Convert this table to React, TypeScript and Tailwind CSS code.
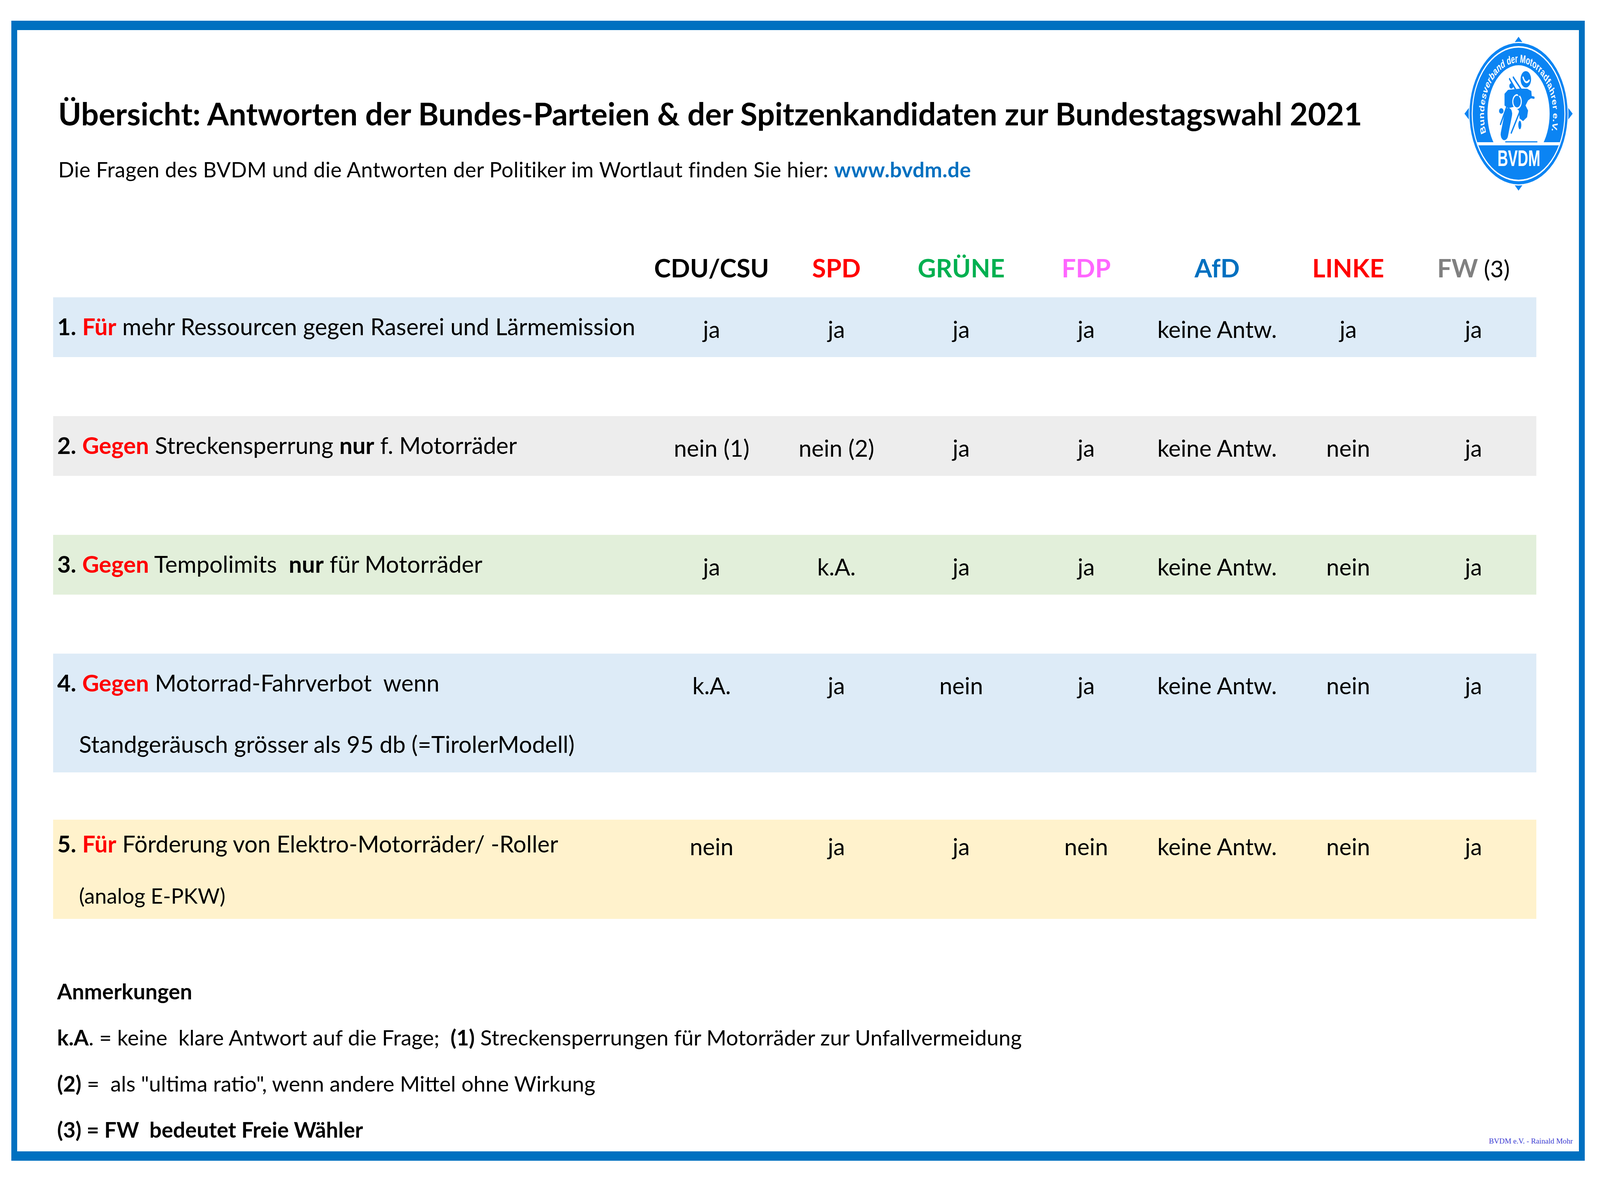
import React from "react";

// The frame is 4096 CSS px wide and 3028 tall: horizontal sizes follow the
// reference at 0.6416, vertical sizes follow it 1:1.
const GRID = "grid w-[3796.3px] grid-cols-[1525.7px_319.5px_319.5px_319.5px_320.2px_350.3px_320.8px_320.8px]";
const BLUE = "#0b84f3";

function Red({ children }: { children: React.ReactNode }) {
  return <span className="font-bold text-[#ff0000]">{children}</span>;
}

function B({ children }: { children: React.ReactNode }) {
  return <span className="font-bold">{children}</span>;
}

function Logo() {
  return (
    <svg viewBox="0 0 432 394" preserveAspectRatio="none" className="w-[277px] h-[394px]">
      <defs>
        <clipPath id="badgeInner">
          <ellipse cx="216" cy="197" rx="183" ry="169" />
        </clipPath>
        <path id="badgeArc" d="M 86.3 245.8 A 138 134 0 1 1 345.7 245.8" />
      </defs>
      {/* compass points */}
      <polygon points="216,0 154,56 278,56" fill={BLUE} />
      <polygon points="216,394 154,338 278,338" fill={BLUE} />
      <polygon points="0,197 56,150 56,244" fill={BLUE} />
      <polygon points="432,197 376,150 376,244" fill={BLUE} />
      <ellipse cx="216" cy="197" rx="199" ry="184" fill="white" />
      <ellipse cx="216" cy="197" rx="196" ry="181" fill={BLUE} />
      <circle cx="216" cy="197" r="124" fill="white" />
      <g clipPath="url(#badgeInner)">
        <rect x="0" y="270" width="432" height="8" fill="white" />
        <rect x="0" y="278" width="432" height="120" fill={BLUE} />
      </g>
      <ellipse cx="216" cy="197" rx="185" ry="171" fill="none" stroke="white" strokeWidth="4" />
      <text fill="white" fontFamily="'Liberation Sans', Arial, sans-serif" fontWeight="bold" fontSize="29">
        <textPath href="#badgeArc" textLength="515" lengthAdjust="spacingAndGlyphs">
          Bundesverband der Motorradfahrer e.V.
        </textPath>
      </text>
      <text
        x="217"
        y="331"
        textAnchor="middle"
        fill="white"
        fontFamily="'Liberation Sans', Arial, sans-serif"
        fontWeight="bold"
        fontSize="58"
      >
        BVDM
      </text>
      {/* rider */}
      <g fill={BLUE} stroke="none">
        <rect x="152.5" y="181" width="30" height="85" rx="15" transform="rotate(17 167.5 223.5)" />
        <polygon points="160,146 174,136 220,133 250,133 267,139 269,156 254,163 244,176 254,189 250,206 234,216 220,209 217,189 200,179 174,183 160,176" />
        <circle cx="245" cy="109" r="21" />
        <ellipse cx="187" cy="126" rx="8" ry="7" />
        <ellipse cx="147" cy="190" rx="9" ry="7" />
        <ellipse cx="221" cy="226" rx="6" ry="11" />
        <circle cx="210" cy="166" r="19" fill="white" />
        <circle cx="210" cy="166" r="15" />
      </g>
      <path d="M 234 104 Q 244 124 258 112" fill="none" stroke="white" strokeWidth="5" strokeLinecap="round" />
      <g stroke={BLUE} strokeLinecap="round" fill="none">
        <line x1="179" y1="161" x2="144" y2="224" strokeWidth="5" />
        <line x1="232" y1="174" x2="187" y2="246" strokeWidth="5" />
        <line x1="180" y1="108" x2="218" y2="150" strokeWidth="5" />
        <line x1="195" y1="104" x2="232" y2="140" strokeWidth="5" />
        <line x1="240" y1="151" x2="277" y2="156" strokeWidth="6" />
        <path d="M 164 269 L 290 269" strokeWidth="3" />
      </g>
    </svg>
  );
}

type Row = {
  bg: string;
  h: string;
  mt: string;
  ansLead: string;
  label: React.ReactNode;
  answers: string[];
};

const rows: Row[] = [
  {
    bg: "bg-[#ddebf7]",
    h: "h-[153px]",
    mt: "mt-0",
    ansLead: "leading-[162px]",
    label: (
      <div className="leading-[148px]">
        <B>1.</B> <Red>Für</Red> mehr Ressourcen gegen Raserei und Lärmemission
      </div>
    ),
    answers: ["ja", "ja", "ja", "ja", "keine Antw.", "ja", "ja"],
  },
  {
    bg: "bg-[#ededed]",
    h: "h-[153px]",
    mt: "mt-[151px]",
    ansLead: "leading-[162px]",
    label: (
      <div className="leading-[148px]">
        <B>2.</B> <Red>Gegen</Red> Streckensperrung <B>nur</B> f. Motorräder
      </div>
    ),
    answers: ["nein (1)", "nein (2)", "ja", "ja", "keine Antw.", "nein", "ja"],
  },
  {
    bg: "bg-[#e2efda]",
    h: "h-[153px]",
    mt: "mt-[151px]",
    ansLead: "leading-[162px]",
    label: (
      <div className="leading-[148px]">
        <B>3.</B> <Red>Gegen</Red> Tempolimits{"  "}<B>nur</B> für Motorräder
      </div>
    ),
    answers: ["ja", "k.A.", "ja", "ja", "keine Antw.", "nein", "ja"],
  },
  {
    bg: "bg-[#ddebf7]",
    h: "h-[304px]",
    mt: "mt-[151px]",
    ansLead: "leading-[162px]",
    label: (
      <>
        <div className="leading-[148px]">
          <B>4.</B> <Red>Gegen</Red> Motorrad-Fahrverbot{"  "}wenn
        </div>
        <div className="leading-[166px] pl-[55.68px]">Standgeräusch grösser als 95 db (=TirolerModell)</div>
      </>
    ),
    answers: ["k.A.", "ja", "nein", "ja", "keine Antw.", "nein", "ja"],
  },
  {
    bg: "bg-[#fff2cc]",
    h: "h-[254px]",
    mt: "mt-[121px]",
    ansLead: "leading-[136px]",
    label: (
      <>
        <div className="leading-[122px]">
          <B>5.</B> <Red>Für</Red> Förderung von Elektro-Motorräder/ -Roller
        </div>
        <div className="leading-[144px] pl-[55.68px] text-[54.4px]">(analog E-PKW)</div>
      </>
    ),
    answers: ["nein", "ja", "ja", "nein", "keine Antw.", "nein", "ja"],
  },
];

const parties = [
  { name: "CDU/CSU", color: "text-black" },
  { name: "SPD", color: "text-[#ff0000]" },
  { name: "GRÜNE", color: "text-[#00b050]" },
  { name: "FDP", color: "text-[#ff66ff]" },
  { name: "AfD", color: "text-[#0070c0]" },
  { name: "LINKE", color: "text-[#ff0000]" },
];

export default function App() {
  return (
    <div className="w-screen h-screen bg-white pl-[28.9px] pt-[53px] font-['Lato',sans-serif] text-black overflow-hidden">
      <div className="w-[4028px] h-[2918px] border-x-[15.4px] border-y-[24px] border-[#0070c0] flex flex-col">
        {/* title + logo */}
        <div className="flex justify-between items-start">
          <div className="pt-[153px] pl-[105px] whitespace-pre">
            <h1 className="text-[79.8px] leading-[120px] font-bold">
              Übersicht: Antworten der Bundes-Parteien & der Spitzenkandidaten zur Bundestagswahl 2021
            </h1>
            <p className="text-[53.76px] leading-[167.6px] tracking-[0.008em]">
              Die Fragen des BVDM und die Antworten der Politiker im Wortlaut finden Sie hier:{" "}
              <span className="font-bold text-[#0070c0]">www.bvdm.de</span>
            </p>
          </div>
          <div className="mt-[17px] mr-[15.5px]">
            <Logo />
          </div>
        </div>

        {/* table */}
        <div className="pl-[92.4px] mt-[111px] text-[59.52px] whitespace-pre">
          <div className={`${GRID} h-[132px] leading-[112px] text-[64.64px] font-bold`}>
            <div />
            {parties.map((p) => (
              <div key={p.name} className={`text-center ${p.color}`}>
                {p.name}
              </div>
            ))}
            <div className="text-center">
              <span className="text-[#808080]">FW</span>
              <span className="font-normal text-[59.52px]"> (3)</span>
            </div>
          </div>

          {rows.map((r, i) => (
            <div key={i} className={`${GRID} ${r.bg} ${r.h} ${r.mt}`}>
              <div className="pl-[10.24px]">{r.label}</div>
              {r.answers.map((a, j) => (
                <div key={j} className={`text-center ${r.ansLead}`}>
                  {a}
                </div>
              ))}
            </div>
          ))}
        </div>

        {/* notes */}
        <div className="mt-[126px] flex justify-between items-end pl-[102.4px] pr-[15.5px]">
          <div className="text-[55.04px] leading-[118px] whitespace-pre">
            <div className="font-bold">Anmerkungen</div>
            <div>
              <B>k.A</B>. = keine{"  "}klare Antwort auf die Frage;{"  "}<B>(1)</B> Streckensperrungen für Motorräder zur
              Unfallvermeidung
            </div>
            <div>
              <B>(2)</B> ={"  "}als "ultima ratio", wenn andere Mittel ohne Wirkung
            </div>
            <div className="font-bold">(3) = FW{"  "}bedeutet Freie Wähler</div>
          </div>
          <div className="mb-[18.6px] text-[19.2px] leading-[21.12px] text-[#3c3cd2] font-['Liberation_Serif',serif]">
            BVDM e.V. - Rainald Mohr
          </div>
        </div>
      </div>
    </div>
  );
}
